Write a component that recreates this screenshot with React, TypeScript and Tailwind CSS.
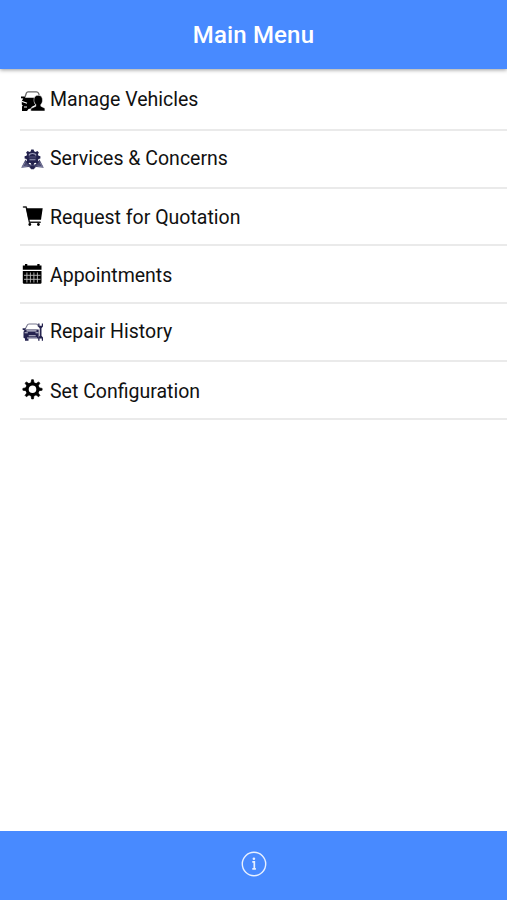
import React from "react";

type MenuItemType = {
  title: string;
  icon: React.ReactNode;
  row: string;
  iconClass: string;
  textClass: string;
};

function VehicleIcon() {
  return (
    <>
      <path
        d="M5 8 6.400 4Q6.900 2.800 8 2.800h8.500q1.300 0 1.900 1.200l.8 2"
        fill="none"
        stroke="#666"
        strokeWidth="1.300"
      />
      <path d="M1 7.500h3.500l1 1.300h8.800v5l1 2.200-3.500 1.800-.8 1.700-2.500.6-1.500 2H2v-4.500l.8-1-1-1V12l1.500-2.500L1 9.200z" />
      <path d="M1.500 12.200 7 14.200M4 18h3" stroke="#fff" strokeWidth="1.100" />
      <path
        d="M18.200 6.300c2.900 0 4.300 2 4.300 4.700 0 2.200-.7 3.600-1.700 4.600v1.600l4.100 2.100V22H10.800v-2.500l5-2.200v-1.700c-1-1-1.900-2.400-1.900-4.600 0-2.700 1.400-4.700 4.300-4.700z"
        stroke="#fff"
        strokeWidth=".5"
      />
    </>
  );
}

function ServiceIcon() {
  return (
    <g fill="#23224d">
      <path d="m5.500 11.500 3.300 4.500 3.700 1 3.700-1 3.300-4.500 4.300 8.300-7.500-.8-3.800 2-3.800-2-7.500.8z" fill="#4a4a70" />
      <path d="m10.900 2 .5-.6h2.200l.5 1.900 1.500.6 1.700-1 1.600 1.600-1 1.700.6 1.500 1.900.5v2.200l-1.900.5-.6 1.500 1 1.700-1.600 1.600-1.700-1-1.500.6-.5 1.900h-2.200l-.5-1.900-1.500-.6-1.700 1-1.600-1.600 1-1.700-.6-1.500-1.900-.5V8.200l1.900-.5.6-1.500-1-1.700 1.600-1.600 1.700 1 1.500-.6z" />
      <path d="M9 7.500q.5-2 3.500-2t3.500 2M9.500 11.700h6" fill="none" stroke="#9b9cb8" strokeWidth="1.100" />
      <path d="M8.800 8h7.400v2.500H8.800z" fill="#3d3c66" />
      <path
        d="M5 14.500 2.500 18.800l5-.8M20 14.500l2.500 4.300-5-.8"
        fill="none"
        stroke="#8788aa"
        strokeWidth=".8"
      />
      <path d="M10.500 18.500h4l-.5 2.300h-3zM7.500 14.300l2 3.200M17.500 14.300l-2 3.200" stroke="#23224d" strokeWidth=".8" />
    </g>
  );
}

function CartIcon() {
  return (
    <>
      <path
        d="M3.500 2.900h2.700l3.200 15.300h10.800"
        fill="none"
        stroke="#222"
        strokeWidth="1.500"
        strokeLinecap="round"
        strokeLinejoin="round"
      />
      <path d="M6 4.200h16.700L21 15.800H8.500z" />
      <circle cx="9.800" cy="20.500" r="1.400" />
      <circle cx="18.400" cy="20.500" r="1.400" />
    </>
  );
}

function CalendarIcon() {
  return (
    <>
      <path d="M5 2h2.300v1.500h10V2h2.300v1.500h1.900v4.300H2.800V3.500H5z" />
      <path d="M2.800 9h18.700v11.500q0 1.200-1.200 1.200H4q-1.200 0-1.200-1.200z" />
      <path
        d="M4 13.300h16.500M4 17.300h16.500M6.900 10.500v10M10.400 10.500v10M13.900 10.500v10M17.400 10.500v10"
        stroke="#bbb"
        strokeWidth=".9"
      />
    </>
  );
}

function RepairIcon() {
  return (
    <g fill="#25234f">
      <path
        d="M5 9.500 7.200 5.200Q7.700 4 9 4h7q1.300 0 1.800 1l.8 2"
        fill="none"
        stroke="#77778e"
        strokeWidth="1.100"
      />
      <path d="M2.600 8.300h3.200L5 9.600h13.700v9H8.500v2.200H5v-2.300l-1.500-.7v-6l1-1.400-1.900-.7z" />
      <path
        d="M4.600 12.800h3.200M15.500 12.800h3M8.700 15.800h7M6.500 10.900h10M7 18h10"
        stroke="#c9c9d8"
        strokeWidth="1.100"
      />
      <path d="M18.200 3.500v3l1.500 1.700v7.600l-1.500 1.700v3.300h1.300v-2.200h2.300v2.200H23v-3.300l-1.500-1.700V8.200L23 6.500v-3h-1.200v2.200h-2.300V3.500z" />
    </g>
  );
}

function GearIcon() {
  return (
    <>
      <circle cx="12.500" cy="11.300" r="5.400" fill="none" stroke="#000" strokeWidth="3.200" />
      <path
        d="m11 5 .6-3.300h1.800L14 5zM11 17.600l.6 3.300h1.800l.6-3.300zM6.200 9.800l-3.300.6v1.800l3.300.6zM18.800 9.800l3.300.6v1.800l-3.300.6zM7 7.900 5.100 5.200l1.300-1.300L9.100 5.800zM18 7.900l1.900-2.700-1.300-1.300-2.700 1.900zM7 14.700l-1.900 2.700 1.300 1.300 2.700-1.900zM18 14.700l1.900 2.700-1.300 1.300-2.700-1.900z"
        stroke="#000"
        strokeWidth=".7"
      />
    </>
  );
}

const items: MenuItemType[] = [
  { title: "Manage Vehicles", icon: <VehicleIcon />, row: "h-[62px]", iconClass: "mt-5", textClass: "mt-[19px]" },
  { title: "Services & Concerns", icon: <ServiceIcon />, row: "h-[58px]", iconClass: "mt-[17px]", textClass: "mt-4" },
  { title: "Request for Quotation", icon: <CartIcon />, row: "h-[57px]", iconClass: "mt-[15px]", textClass: "mt-[17px]" },
  { title: "Appointments", icon: <CalendarIcon />, row: "h-[58px]", iconClass: "mt-4", textClass: "mt-[18px]" },
  { title: "Repair History", icon: <RepairIcon />, row: "h-[58px]", iconClass: "mt-4", textClass: "mt-4" },
  { title: "Set Configuration", icon: <GearIcon />, row: "h-[58px]", iconClass: "mt-4", textClass: "mt-[18px]" },
];

function App() {
  return (
    <div className="flex flex-col h-screen bg-white font-[Roboto,sans-serif] text-[#111]">
      <header className="flex items-center justify-center h-[69px] pt-px shrink-0 bg-[#488aff] shadow-[0_1px_4px_rgba(0,0,0,0.4)]">
        <h1 className="text-2xl font-medium tracking-[0.15px] text-white">Main Menu</h1>
      </header>
      <ul className="flex-1 pl-5">
        {items.map((item) => (
          <li
            key={item.title}
            className={`flex items-start gap-1.5 border-b-2 border-[#eaeaea] ${item.row}`}
          >
            <svg viewBox="0 0 25 24" className={`w-[25px] h-6 -mr-px shrink-0 ${item.iconClass}`}>
              {item.icon}
            </svg>
            <span className={`text-[19.5px] leading-6 ${item.textClass}`}>{item.title}</span>
          </li>
        ))}
      </ul>
      <footer className="flex justify-center h-[69px] pt-5 shrink-0 bg-[#488aff]">
        <svg viewBox="0 0 26 26" className="w-[26px] h-[26px]" fill="none" stroke="#e8f0ff">
          <circle cx="13" cy="13" r="11.700" strokeWidth="1.400" />
          <path d="M11.300 10.800h2v7M11.300 17.900h3.600" strokeWidth="1.700" />
          <circle cx="12.900" cy="7.800" r="1.300" fill="#e8f0ff" stroke="none" />
        </svg>
      </footer>
    </div>
  );
}

export default App;
